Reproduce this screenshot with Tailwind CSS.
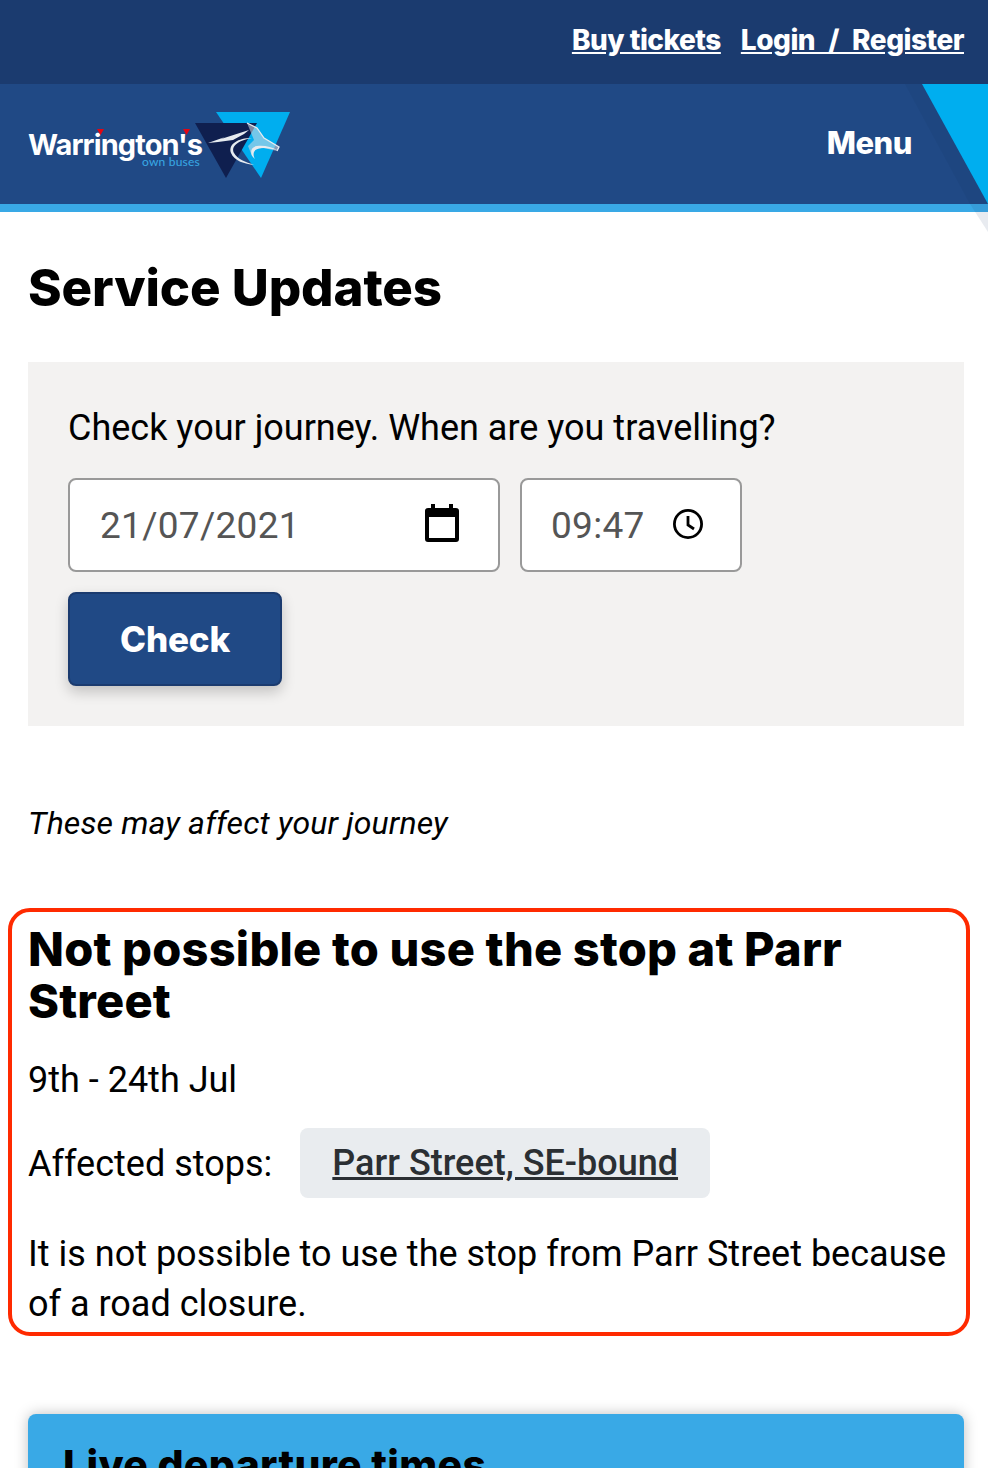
<!doctype html>
<html lang="en"><head><meta charset="utf-8"><title>Service Updates</title>
<script src="https://cdn.jsdelivr.net/npm/@tailwindcss/browser@4"></script></head>
<body class="bg-white">
<div class="relative h-[1468px] w-[988px] overflow-hidden bg-white text-black font-['Roboto',sans-serif]">
  <div class="flex h-[84px] items-start justify-end gap-5 bg-[#1b3b6f] px-6 pt-[20px] font-['Inter',sans-serif] text-[28px] font-extrabold leading-[40px] tracking-[-0.5px] text-white">
    <a href="#" class="underline">Buy tickets</a>
    <a href="#" class="underline [word-spacing:7.5px]">Login / Register</a>
  </div>
  <header class="relative flex h-[128px] items-start justify-between border-b-8 border-[#39a9e6] bg-[#204985] pl-7 pr-[76px]">
    <svg class="mt-7 h-[66px] w-[262px]" viewBox="0 0 262 66" role="img" aria-label="Warrington's own buses">
      <polygon points="188,0 262,0 233,66" fill="#00aeef"/>
      <polygon points="167,11 229,11 198,66" fill="#0f1f4f"/>
      <path d="M180 31 L197 25 L193 27 L221 18 L216 22 L205 28 L190 30Z" fill="#e6ebf0"/>
      <path d="M219 11 L229 16 L236 26 L251 35 L249 39 L236 36 L226 37 L224 44 L220 34 L226 28 Z" fill="#d5dde4" fill-opacity=".55"/>
      <path d="M219 11 L229 16 L236 26 L251 35 L249 39" fill="none" stroke="#e6ebf0" stroke-width="1.300"/>
      <path d="M224 26 C208 29 203 35 206 41 C209 47 218 50 226 53 C217 52 206 49 203 41 C200 32 210 26 224 26Z" fill="#e6ebf0"/>
      <path d="M249 38 C240 36 229 34 226 40 C225 43 226 45 227 47 C222 44 221 35 229 34 C236 33 244 35 249 38Z" fill="#e6ebf0"/>
      <text x="0" y="43" font-family="Inter, sans-serif" font-size="29" font-weight="700" letter-spacing="-0.9" fill="#fff">Warrington's</text>
      <text x="114" y="54" font-family="Lato, sans-serif" font-size="12" letter-spacing="0.2" fill="#39a9e6">own buses</text>
      <polygon points="69,17 76,17 72.500,23" fill="#e30613"/>
      <polygon points="155,17 162,17 158.500,23" fill="#e30613"/>
    </svg>
    <a href="#" class="mt-[39px] font-['Inter',sans-serif] text-[31px] font-extrabold leading-[40px] tracking-[-0.5px] text-white">Menu</a>
  </header>
  <svg class="absolute left-[900px] top-[84px] h-[150px] w-[88px]" viewBox="0 0 88 150" aria-hidden="true">
    <polygon points="5,0 22,0 88,120 70,120" fill="#1b3b6f" fill-opacity=".2"/>
    <polygon points="70,120 88,120 88,148" fill="#1b3b6f" fill-opacity=".1"/>
    <polygon points="22,0 88,0 88,120" fill="#00aeef"/>
  </svg>
  <main class="pl-7 pr-6">
    <h1 class="pt-[46px] font-['Inter',sans-serif] text-[51px] font-extrabold leading-[60px] tracking-[-0.1px]">Service Updates</h1>
    <section class="mt-[44px] h-[364px] bg-[#f3f2f1] px-10 pt-[41px]">
      <p class="text-[36px] leading-[50px]">Check your journey. When are you travelling?</p>
      <div class="mt-[25px] flex gap-5">
        <div class="flex h-[94px] w-[432px] items-center justify-between rounded-lg border-2 border-[#999] bg-white pl-[30px] pr-[38px] text-[37px] tracking-[0.3px] text-[#555]">
          <span class="mt-[2px]">21/07/2021</span>
          <svg class="mb-[4px] h-[40px] w-[36px]" viewBox="0 0 36 40" aria-hidden="true"><path d="M7 1h4v4h14V1h4v4h3a3 3 0 0 1 3 3v28a3 3 0 0 1-3 3H4a3 3 0 0 1-3-3V8a3 3 0 0 1 3-3h3zM5 14v21h26V14z" fill="#000"/></svg>
        </div>
        <div class="flex h-[94px] w-[222px] items-center justify-between rounded-lg border-2 border-[#999] bg-white pl-[29px] pr-[36px] text-[37px] tracking-[0.3px] text-[#555]">
          <span class="mt-[2px]">09:47</span>
          <svg class="mb-[2px] h-[32px] w-[32px]" viewBox="0 0 32 32" fill="none" stroke="#000" stroke-width="2.800" aria-hidden="true"><circle cx="16" cy="16" r="13.600"/><path d="M16 8v9l6 4"/></svg>
        </div>
      </div>
      <button class="mt-5 h-[94px] w-[214px] rounded-lg border-2 border-[#1b3b6f] bg-[#204985] font-['Inter',sans-serif] text-[35px] font-extrabold tracking-[-0.2px] text-white shadow-[0_6px_14px_rgba(0,0,0,.2)]">Check</button>
    </section>
    <p class="mt-[74px] text-[32px] italic leading-[46px] tracking-[0.13px]">These may affect your journey</p>
    <article class="ml-[-20px] mr-[-6px] mt-[62px] h-[428px] rounded-[22px] border-4 border-[#ff2a00] px-4 pt-[11px]">
      <h2 class="max-w-[880px] font-['Inter',sans-serif] text-[47px] font-extrabold leading-[52px] tracking-[0.2px]">Not possible to use the stop at Parr Street</h2>
      <p class="mt-[28px] text-[36px] leading-[50px]">9th - 24th Jul</p>
      <div class="mt-[23px] flex items-center gap-7">
        <span class="text-[36px] leading-[50px]">Affected stops:</span>
        <a href="#" class="mb-[2px] flex h-[70px] w-[410px] items-center justify-center rounded-lg bg-[#e9ecef] text-[36px] font-medium text-[#2b2f33] underline">Parr Street, SE-bound</a>
      </div>
      <p class="mt-[29px] text-[36px] leading-[50px]">It is not possible to use the stop from Parr Street because of a road closure.</p>
    </article>
    <section class="mt-[78px] h-[200px] rounded-lg bg-[#39a9e6] pl-[35px] pr-9 pt-[26px] shadow-[0_0_14px_rgba(0,0,0,.25)]">
      <h2 class="font-['Inter',sans-serif] text-[41px] font-extrabold leading-[50px] tracking-[0.3px]">Live departure times</h2>
    </section>
  </main>
</div>
</body></html>
